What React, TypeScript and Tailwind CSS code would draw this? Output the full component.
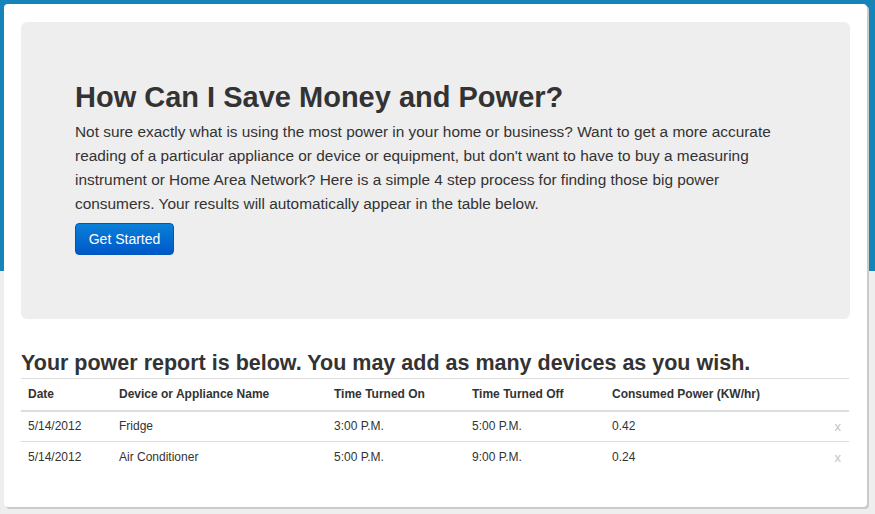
const rows = [
    { date: "5/14/2012", name: "Fridge", on: "3:00 P.M.", off: "5:00 P.M.", power: "0.42" },
    { date: "5/14/2012", name: "Air Conditioner", on: "5:00 P.M.", off: "9:00 P.M.", power: "0.24" },
];

const App = () => {
    return (
        <div className="min-h-[514px] w-[875px] overflow-hidden bg-[linear-gradient(#1585b9_0,#1585b9_271px,#eeeeee_271px)] pt-[4px] pl-[4px] font-['Liberation_Sans',Arial,sans-serif] text-[#333333]">
            <div className="w-[863px] h-[503px] bg-white rounded-[4px] shadow-[2px_2px_0_#c9cccb] pt-[18px] px-[17px]">
                {/* hero */}
                <div className="h-[297px] bg-[#eeeeee] rounded-[6px] pl-[54px] pr-[40px] pt-[57px]">
                    <h1 className="text-[29px] leading-[36px] font-bold text-[#333333]">How Can I Save Money and Power?</h1>
                    <p className="mt-[5px] text-[15.4px] leading-[24px] w-[706px]">
                        Not sure exactly what is using the most power in your home or business? Want to get a more accurate
                        reading of a particular appliance or device or equipment, but don't want to have to buy a measuring
                        instrument or Home Area Network? Here is a simple 4 step process for finding those big power
                        consumers. Your results will automatically appear in the table below.
                    </p>
                    <button className="mt-[7px] w-[99px] h-[32px] rounded-[4px] border border-[#0055bb] bg-[linear-gradient(#0a80d8,#0058c8)] text-white text-[14px]">
                        Get Started
                    </button>
                </div>

                {/* report */}
                <h2 className="mt-[31px] text-[21.5px] leading-[26px] font-bold">
                    Your power report is below. You may add as many devices as you wish.
                </h2>
                <table className="mt-[2px] w-[828px] table-fixed border-collapse text-[12px]">
                    <thead>
                        <tr className="border-t border-[#dddddd] border-b-2 border-b-[#dddddd] h-[32px]">
                            <th className="w-[91px] pl-[7px] text-left font-bold">Date</th>
                            <th className="w-[215px] pl-[7px] text-left font-bold">Device or Appliance Name</th>
                            <th className="w-[138px] pl-[7px] text-left font-bold">Time Turned On</th>
                            <th className="w-[140px] pl-[7px] text-left font-bold">Time Turned Off</th>
                            <th className="w-[200px] pl-[7px] text-left font-bold">Consumed Power (KW/hr)</th>
                            <th></th>
                        </tr>
                    </thead>
                    <tbody>
                        {rows.map((row, i) => (
                            <tr key={i} className={`h-[31px] ${i === 0 ? "border-b border-[#dddddd]" : ""}`}>
                                <td className="pl-[7px]">{row.date}</td>
                                <td className="pl-[7px]">{row.name}</td>
                                <td className="pl-[7px]">{row.on}</td>
                                <td className="pl-[7px]">{row.off}</td>
                                <td className="pl-[7px]">{row.power}</td>
                                <td className="pr-[8px] text-right text-[#c4c4c4] text-[13px]">x</td>
                            </tr>
                        ))}
                    </tbody>
                </table>
            </div>
        </div>
    );
};

export default App;
